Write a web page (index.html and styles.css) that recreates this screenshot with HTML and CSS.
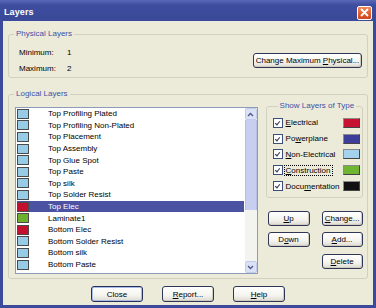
FILE: index.html
```html
<!DOCTYPE html>
<html lang="en">

<head>
    <meta charset="UTF-8">
    <meta name="viewport" content="width=device-width, initial-scale=1.0">
    <title>Layers</title>
    <link rel="stylesheet" href="styles.css">
</head>

<body>

    <main class="window">

        <header class="titlebar">
            <span class="title">Layers</span>
            <span class="close-btn">
                <svg width="9" height="9" viewBox="0 0 9 9">
                    <path d="M1 1 L8 8 M8 1 L1 8" stroke="#fff" stroke-width="1.8" />
                </svg>
            </span>
        </header>

        <section class="dialog">

            <fieldset class="group physical">
                <legend>Physical Layers</legend>
                <div class="physical-body">
                    <div class="phys-info">
                        <span>Minimum:</span><span>1</span>
                        <span>Maximum:</span><span>2</span>
                    </div>
                    <button class="btn btn-wide">Change Maximum <u>P</u>hysical...</button>
                </div>
            </fieldset>

            <fieldset class="group logical">
                <legend>Logical Layers</legend>
                <div class="logical-body">

                    <div class="listbox">
                        <ul class="layer-list">
                            <li><span class="swatch light"></span>Top Profiling Plated</li>
                            <li><span class="swatch light"></span>Top Profiling Non-Plated</li>
                            <li><span class="swatch light"></span>Top Placement</li>
                            <li><span class="swatch light"></span>Top Assembly</li>
                            <li><span class="swatch light"></span>Top Glue Spot</li>
                            <li><span class="swatch light"></span>Top Paste</li>
                            <li><span class="swatch light"></span>Top silk</li>
                            <li><span class="swatch light"></span>Top Solder Resist</li>
                            <li class="selected"><span class="swatch red"></span>Top Elec</li>
                            <li><span class="swatch green"></span>Laminate1</li>
                            <li><span class="swatch red"></span>Bottom Elec</li>
                            <li><span class="swatch light"></span>Bottom Solder Resist</li>
                            <li><span class="swatch light"></span>Bottom silk</li>
                            <li><span class="swatch light"></span>Bottom Paste</li>
                        </ul>
                        <div class="scrollbar">
                            <span class="arrow">
                                <svg width="7" height="5" viewBox="0 0 7 5">
                                    <path d="M1 4 L3.5 1.5 L6 4" fill="none" stroke="#4d5a8c" stroke-width="1.4" />
                                </svg>
                            </span>
                            <span class="thumb"></span>
                            <span class="track"></span>
                            <span class="arrow">
                                <svg width="7" height="5" viewBox="0 0 7 5">
                                    <path d="M1 1 L3.5 3.5 L6 1" fill="none" stroke="#4d5a8c" stroke-width="1.4" />
                                </svg>
                            </span>
                        </div>
                    </div>

                    <div class="side">
                        <fieldset class="group types">
                            <legend>Show Layers of Type</legend>
                            <div class="type-row"><span class="check"></span><span class="type-label"><u>E</u>lectrical</span><span class="type-swatch red"></span></div>
                            <div class="type-row"><span class="check"></span><span class="type-label">Po<u>w</u>erplane</span><span class="type-swatch blue"></span></div>
                            <div class="type-row"><span class="check"></span><span class="type-label"><u>N</u>on-Electrical</span><span class="type-swatch light"></span></div>
                            <div class="type-row"><span class="check"></span><span class="type-label focus"><u>C</u>onstruction</span><span class="type-swatch green"></span></div>
                            <div class="type-row"><span class="check"></span><span class="type-label">Docu<u>m</u>entation</span><span class="type-swatch black"></span></div>
                        </fieldset>

                        <div class="side-buttons">
                            <button class="btn"><u>U</u>p</button>
                            <button class="btn"><u>C</u>hange...</button>
                            <button class="btn">D<u>o</u>wn</button>
                            <button class="btn"><u>A</u>dd...</button>
                            <span></span>
                            <button class="btn"><u>D</u>elete</button>
                        </div>
                    </div>

                </div>
            </fieldset>

            <footer class="footer">
                <button class="btn btn-main btn-default">Close</button>
                <button class="btn btn-main"><u>R</u>eport...</button>
                <button class="btn btn-main"><u>H</u>elp</button>
            </footer>

        </section>

    </main>

</body>

</html>
```

FILE: styles.css
```css
/*      Variables       */
:root {
    --frame: #3c4a9c;
    --face: #ecead9;
    --group-line: #d2d0bf;
    --caption: #3f52a6;
    --swatch-light: #98cbe6;
    --swatch-red: #c4102c;
    --swatch-green: #6cb02e;
}

/*      Reset Styles    */
html {
    padding: 0;
    margin: 0;
    box-sizing: border-box;
    font-family: "Liberation Sans", Arial, sans-serif;
}

body {
    padding: 0;
    margin: 0;
    overflow: hidden;
}

*,
*::before,
*::after {
    box-sizing: inherit;
}

.window {
    width: 376px;
    height: 308px;
    background-color: var(--frame);
    padding: 0 3px 3px;

    display: flex;
    flex-direction: column;
}

/*      Title bar       */
.titlebar {
    height: 21px;
    margin: 0 -3px;
    padding: 0 4px 0 4px;
    background: linear-gradient(#5a69b8, #3f4d9f 5px, #3b4999 18px, #3c4a9c);

    display: flex;
    align-items: center;
    justify-content: space-between;
}

.title {
    color: #fff;
    font-size: 9px;
    font-weight: bold;
    letter-spacing: .1px;
    margin-top: 2px;
}

.close-btn {
    width: 15px;
    height: 14px;
    margin-top: 4px;
    border: 1px solid #fff;
    border-radius: 2px;
    background: linear-gradient(#ee8a5c, #e0592a 60%, #cc4720);

    display: grid;
    place-content: center;
}

.close-btn svg {
    display: block;
}

/*      Dialog face     */
.dialog {
    flex: 1;
    background-color: var(--face);
    padding: 8px 5px 0;
    font-size: 8px;
    color: #000;
}

.group {
    margin: 0;
    padding: 0;
    border: 1px solid var(--group-line);
    border-radius: 3px;
    min-width: 0;
}

.group legend {
    color: var(--caption);
    padding: 0 2px;
    margin-left: 5px;
    line-height: 10px;
    font-size: 8px;
}

/*      Physical        */
.physical-body {
    display: flex;
    justify-content: space-between;
    align-items: flex-start;
    padding: 5px 5px 1px 10px;
}

.phys-info {
    display: grid;
    grid-template-columns: 48px auto;
    grid-auto-rows: 16px;
    align-items: center;
}

.btn-wide {
    width: 109px;
    margin-top: 9px;
}

/*      Buttons         */
.btn {
    font-family: inherit;
    font-size: 8px;
    color: #000;
    height: 15px;
    padding: 0;
    border: 1px solid #2f3656;
    border-radius: 3px;
    background: linear-gradient(#ffffff, #f4f3ee 60%, #dedad0);
    box-shadow: inset -1px -1px 0 #cfcbc0;
}

.btn u {
    text-underline-offset: 1px;
}

/*      Logical         */
.logical {
    margin-top: 11px;
}

.logical-body {
    display: flex;
    align-items: flex-start;
    gap: 8px;
    padding: 0 4px 4px 6px;
}

.listbox {
    margin-top: 8px;
    width: 244px;
    height: 167px;
    background-color: #fff;
    border: 1px solid #8b9bb8;

    display: flex;
}

.layer-list {
    flex: 1;
    list-style: none;
    margin: 0;
    padding: 0 1px;
}

.layer-list li {
    height: 11.6px;
    display: flex;
    align-items: center;
    white-space: nowrap;
}

.layer-list li.selected {
    background-color: #4b52a2;
    color: #fff;
}

.swatch {
    width: 12px;
    height: 10px;
    border: 1px solid #4a4a4a;
    margin-right: 19px;
    flex-shrink: 0;
}

.swatch.light { background-color: var(--swatch-light); }
.swatch.red { background-color: var(--swatch-red); }
.swatch.green { background-color: var(--swatch-green); }

.scrollbar {
    width: 12px;
    background-color: #f3f3ef;
    display: flex;
    flex-direction: column;
}

.scrollbar .arrow {
    height: 12px;
    background: #dce2f6;
    border: 1px solid #c2cbea;
    border-radius: 2px;
    display: grid;
    place-content: center;
}

.scrollbar .thumb {
    height: 90px;
    background: #c7cef0;
    border-left: 1px solid #b6bfe6;
    border-right: 1px solid #b6bfe6;
}

.scrollbar .track {
    flex: 1;
}

/*      Side column     */
.side {
    margin-top: 2px;
    width: 98px;
}

.types {
    padding: 4px 2px 3px 6px;
}

.type-row {
    height: 15.8px;
    display: flex;
    align-items: center;
}

.check {
    width: 10px;
    height: 10px;
    border: 1px solid #3a5078;
    background-color: #fff;
    margin-right: 2px;
    flex-shrink: 0;

    display: grid;
    place-content: center;
}

.check::after {
    content: "";
    width: 3px;
    height: 5px;
    margin-top: -1px;
    border: solid #2c3550;
    border-width: 0 1.5px 1.5px 0;
    transform: rotate(40deg);
}

.type-label {
    flex: 1;
    padding: 0 1px;
    white-space: nowrap;
}

.type-label.focus {
    flex: 0 0 auto;
    outline: 1px dotted #000;
    outline-offset: 0;
    margin-right: auto;
}

.type-swatch {
    width: 17px;
    height: 10px;
    border: 1px solid #8a8a8a;
    border-right-color: #444;
    border-bottom-color: #444;
}

.type-swatch.red { background-color: #c81232; }
.type-swatch.blue { background-color: #3d3e9c; }
.type-swatch.light { background-color: #a4d2ec; }
.type-swatch.green { background-color: #6fb531; }
.type-swatch.black { background-color: #111; }

.side-buttons {
    margin-top: 13px;
    padding-left: 2px;

    display: grid;
    grid-template-columns: 42px 41px;
    column-gap: 12px;
    row-gap: 6.5px;
}

/*      Footer          */
.footer {
    margin-top: 7px;

    display: flex;
    justify-content: center;
    gap: 19px;
}

.btn-main {
    width: 52px;
    height: 16px;
}

.btn-default {
    border-color: #26305a;
    box-shadow: inset 0 0 0 1px #a9bbe8;
}
```
